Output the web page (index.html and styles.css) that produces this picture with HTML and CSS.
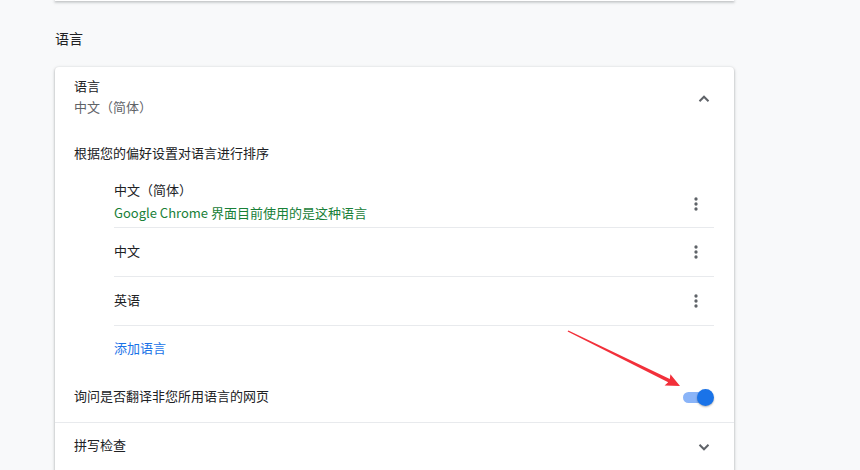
FILE: index.html
```html
<!DOCTYPE html>
<html>
<head>
    <title>设置 - 语言</title>
    <link rel="stylesheet" href="styles.css">
</head>
<body>
    <div class="page">
        <div class="prev-card"></div>
        <h2 class="section-title">语言</h2>
        <div class="card">
            <div class="expand-row">
                <div class="expand-text">
                    <div class="label">语言</div>
                    <div class="sublabel">中文（简体）</div>
                </div>
                <div class="icon-btn">
                    <svg width="20" height="20" viewBox="0 0 20 20"><path d="M5.5 12.2 L10 7.7 L14.5 12.2" fill="none" stroke="#5f6368" stroke-width="2"/></svg>
                </div>
            </div>

            <div class="order-hint">根据您的偏好设置对语言进行排序</div>

            <div class="lang-list">
                <div class="lang-item first">
                    <div class="lang-text">
                        <div class="label">中文（简体）</div>
                        <div class="note">Google Chrome 界面目前使用的是这种语言</div>
                    </div>
                    <div class="more-btn">
                        <svg width="20" height="20" viewBox="0 0 24 24"><circle cx="12" cy="6" r="2" fill="#5f6368"/><circle cx="12" cy="12" r="2" fill="#5f6368"/><circle cx="12" cy="18" r="2" fill="#5f6368"/></svg>
                    </div>
                </div>
                <div class="lang-item">
                    <div class="label">中文</div>
                    <div class="more-btn">
                        <svg width="20" height="20" viewBox="0 0 24 24"><circle cx="12" cy="6" r="2" fill="#5f6368"/><circle cx="12" cy="12" r="2" fill="#5f6368"/><circle cx="12" cy="18" r="2" fill="#5f6368"/></svg>
                    </div>
                </div>
                <div class="lang-item">
                    <div class="label">英语</div>
                    <div class="more-btn">
                        <svg width="20" height="20" viewBox="0 0 24 24"><circle cx="12" cy="6" r="2" fill="#5f6368"/><circle cx="12" cy="12" r="2" fill="#5f6368"/><circle cx="12" cy="18" r="2" fill="#5f6368"/></svg>
                    </div>
                </div>
                <div class="add-row">
                    <a class="add-link">添加语言</a>
                </div>
            </div>

            <div class="toggle-row">
                <div class="label">询问是否翻译非您所用语言的网页</div>
                <div class="toggle on">
                    <div class="track"></div>
                    <div class="knob"></div>
                </div>
            </div>

            <div class="expand-row spell">
                <div class="label">拼写检查</div>
                <div class="icon-btn">
                    <svg width="20" height="20" viewBox="0 0 20 20"><path d="M5.5 7.8 L10 12.3 L14.5 7.8" fill="none" stroke="#5f6368" stroke-width="2"/></svg>
                </div>
            </div>
        </div>
    </div>

    <!-- annotation arrow pointing at the toggle -->
    <svg class="annotation" width="860" height="470" viewBox="0 0 860 470">
        <polygon points="567.6,331.6 568.4,330.4 669.8,379.0 670.4,374.2 680,386 664.6,385.4 668.2,382.2" fill="#f2303a"/>
    </svg>
</body>
</html>
```

FILE: styles.css
```css
body {
    margin: 0;
    background: #f8f9fa;
    font-family: "Noto Sans CJK SC", "Microsoft YaHei", sans-serif;
    font-size: 13px;
    color: #202124;
    overflow: hidden;
}
.page { width: 679px; margin-left: 55px; }
.prev-card {
    height: 1px;
    background: #fff;
    box-shadow: 0 1px 2px 0 rgba(60,64,67,0.3), 0 1px 3px 1px rgba(60,64,67,0.15);
}
.section-title {
    font-size: 14px;
    font-weight: normal;
    line-height: 20px;
    margin: 27px 0 19px;
}
.card {
    background: #fff;
    border-radius: 4px;
    box-shadow: 0 1px 2px 0 rgba(60,64,67,0.3), 0 1px 3px 1px rgba(60,64,67,0.15);
    padding: 0 20px 0 19px;
    height: 420px;
}
.label { line-height: 20px; }
.sublabel { line-height: 21px; color: #5f6368; }
.expand-row {
    display: flex;
    align-items: center;
    justify-content: space-between;
    height: 64px;
}
.expand-row > .label { padding-bottom: 3px; }
.expand-text { padding-bottom: 5px; }
.icon-btn {
    width: 20px;
    height: 20px;
}
.icon-btn svg { display: block; }
.order-hint {
    line-height: 20px;
    margin-top: 12px;
}
.lang-list { margin-left: 40px; }
.lang-item {
    display: flex;
    align-items: center;
    justify-content: space-between;
    height: 48px;
    border-bottom: 1px solid #e8eaed;
}
.lang-item > .label { padding-bottom: 3px; }
.lang-item.first {
    height: 49px;
    margin-top: 15px;
}
.lang-text { padding-bottom: 2px; }
.note {
    color: #188038;
    line-height: 20px;
    margin-top: 3px;
}
.more-btn {
    width: 36px;
    height: 20px;
    display: flex;
    justify-content: center;
}
.lang-item.first .more-btn { margin-top: 3px; }
.add-row {
    height: 46px;
    display: flex;
    align-items: center;
}
.add-link { color: #1a73e8; line-height: 20px; padding-bottom: 2px; cursor: pointer; }
.toggle-row {
    display: flex;
    align-items: center;
    justify-content: space-between;
    height: 50px;
    border-bottom: 1px solid #e8eaed;
    margin: 0 -20px 0 -19px;
    padding: 0 20px 0 19px;
}
.toggle-row > .label { padding-bottom: 2px; }
.toggle {
    position: relative;
    width: 31px;
    height: 17px;
}
.toggle .track {
    position: absolute;
    left: 0;
    top: 3px;
    width: 29px;
    height: 11px;
    border-radius: 6px;
    background: #8ab4f8;
}
.toggle .knob {
    position: absolute;
    right: 0;
    top: 0;
    width: 17px;
    height: 17px;
    border-radius: 50%;
    background: #1a73e8;
    box-shadow: 0 1px 2px rgba(0,0,0,0.3);
}
.spell { height: 47px; }
.annotation {
    position: absolute;
    left: 0;
    top: 0;
    pointer-events: none;
}
```
